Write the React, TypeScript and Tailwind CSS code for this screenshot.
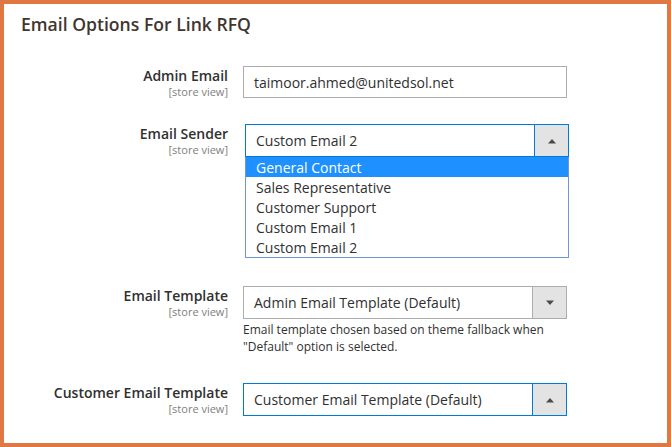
import React from "react";

const senders = [
    "General Contact",
    "Sales Representative",
    "Customer Support",
    "Custom Email 1",
    "Custom Email 2",
];

function Caret({ up }: { up?: boolean }) {
    return (
        <svg width="10" height="6" viewBox="0 0 10 6" className="block">
            {up ? (
                <path d="M1 5.5 L5 1 L9 5.5 Z" fill="#514943" />
            ) : (
                <path d="M1 0.5 L9 0.5 L5 5 Z" fill="#514943" />
            )}
        </svg>
    );
}

function FieldLabel({ text }: { text: string }) {
    return (
        <div className="w-[224px] shrink-0 text-right pt-[1px]">
            <div className="text-[14px] leading-[18px] font-semibold text-[#303030]">
                {text}
            </div>
            <div className="text-[11px] leading-[13px] text-[#808080]">
                [store view]
            </div>
        </div>
    );
}

function SelectBox({
    value,
    focused,
    up,
}: {
    value: string;
    focused?: boolean;
    up?: boolean;
}) {
    return (
        <div
            className={
                focused
                    ? "flex h-[33px] w-[324px] border border-[#007bdb] bg-white"
                    : "flex h-[33px] w-[324px] border border-[#adadad] bg-white"
            }
        >
            <div className="flex-1 flex items-center px-[10px] text-[14px] text-[#303030]">
                {value}
            </div>
            <div
                className={
                    focused
                        ? "w-[34px] flex items-center justify-center bg-[#e3e3e3] border-l border-[#007bdb]"
                        : "w-[34px] flex items-center justify-center bg-[#e3e3e3] border-l border-[#adadad]"
                }
            >
                <Caret up={up} />
            </div>
        </div>
    );
}

export default function App() {
    return (
        <div
            className="w-[671px] h-[447px] border-4 border-[#e07843] bg-white box-border overflow-hidden"
            style={{ fontFamily: '"Open Sans", "Noto Sans", sans-serif' }}
        >
            <h2 className="pl-[17px] pt-[9px] text-[17.6px] leading-[22px] font-semibold text-[#41362f]">
                Email Options For Link RFQ
            </h2>

            <div className="flex gap-[15px] mt-[31px]">
                <FieldLabel text="Admin Email" />
                <div className="w-[324px] h-[32px] border border-[#adadad] flex items-center px-[10px] text-[14px] text-[#303030]">
                    taimoor.ahmed@unitedsol.net
                </div>
            </div>

            <div className="flex gap-[15px] mt-[26px]">
                <FieldLabel text="Email Sender" />
                <div className="ml-[2px]">
                    <SelectBox value="Custom Email 2" focused up />
                    <div className="w-[324px] border border-t-0 border-[#6d97d6] bg-white">
                        {senders.map((s, i) => (
                            <div
                                key={s}
                                className={
                                    i === 0
                                        ? "h-[20px] flex items-center px-[10px] text-[14px] bg-[#1e90ff] text-white"
                                        : "h-[20px] flex items-center px-[10px] text-[14px] text-[#303030]"
                                }
                            >
                                {s}
                            </div>
                        ))}
                    </div>
                </div>
            </div>

            <div className="flex gap-[15px] mt-[28px]">
                <FieldLabel text="Email Template" />
                <div>
                    <SelectBox value="Admin Email Template (Default)" />
                    <p className="mt-[2px] text-[12px] leading-[17px] text-[#303030] w-[324px]">
                        Email template chosen based on theme fallback when
                        "Default" option is selected.
                    </p>
                </div>
            </div>

            <div className="flex gap-[15px] mt-[28px]">
                <FieldLabel text="Customer Email Template" />
                <SelectBox value="Customer Email Template (Default)" focused up />
            </div>
        </div>
    );
}
